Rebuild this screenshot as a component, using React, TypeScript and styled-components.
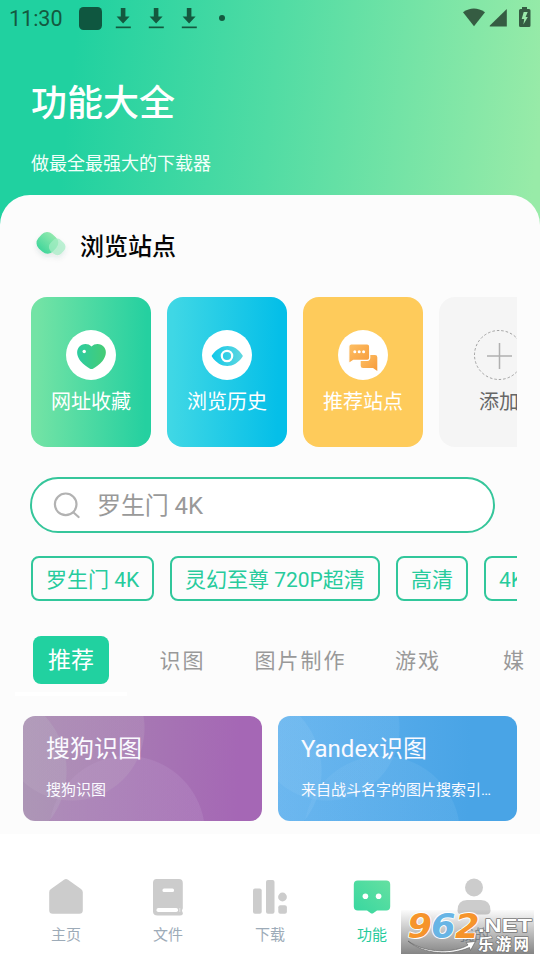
import React from 'react';
import styled, { createGlobalStyle, css } from 'styled-components';

const GlobalStyle = createGlobalStyle`
  * { box-sizing: border-box; }
  body {
    margin: 0;
    background: #fff;
    font-family: Roboto, "Noto Sans CJK SC", sans-serif;
  }
`;

const Screen = styled.div`
  width: 540px;
  height: 960px;
  overflow: hidden;
  display: flex;
  flex-direction: column;
  background: #fff;
`;

const Header = styled.header`
  flex: none;
  height: 235px;
  background: linear-gradient(96deg, #20d1a0 14%, #51dca4 50%, #98eba8 98%);
`;

const StatusBar = styled.div`
  height: 36px;
  padding: 0 9px 0 9px;
  display: flex;
  align-items: center;
  justify-content: space-between;
  color: #14593f;
`;

const Clock = styled.span`
  width: 70px;
  font-size: 21.5px;
  line-height: 36px;
  padding-top: 1px;
`;

const StatusGroup = styled.div`
  display: flex;
  align-items: center;
`;

const Heading = styled.h1`
  margin: 41px 0 0 31px;
  font-size: 36px;
  line-height: 54px;
  font-weight: 500;
  color: #fff;
`;

const Slogan = styled.p`
  margin: 19px 0 0 31px;
  font-size: 18px;
  line-height: 28px;
  color: #f2fffa;
`;

const Panel = styled.main`
  flex: none;
  height: 639px;
  margin-top: -40px;
  border-radius: 30px 30px 0 0;
  background: #fcfcfc;
`;

const SectionTitle = styled.div`
  height: 102px;
  padding: 0 0 0 31px;
  display: flex;
  align-items: center;
  gap: 9px;
`;

const SectionText = styled.h2`
  margin: 0;
  padding-top: 2px;
  font-size: 24px;
  line-height: 36px;
  font-weight: 500;
  color: #050505;
`;

const Scroller = styled.div`
  margin-left: 31px;
  width: 486px;
  display: flex;
  gap: 16px;
  overflow: hidden;
`;

const SiteCard = styled.div<{ $bg: string; $color?: string }>`
  flex: none;
  width: 120px;
  height: 150px;
  padding-top: 33px;
  border-radius: 16px;
  background: ${(p) => p.$bg};
  color: ${(p) => p.$color ?? '#fff'};
  display: flex;
  flex-direction: column;
  align-items: center;
  font-size: 20px;
  line-height: 30px;
  gap: 7px;
  white-space: nowrap;
`;

const SearchBox = styled.div`
  margin: 30px 0 23px 30px;
  width: 465px;
  height: 56px;
  padding-left: 21px;
  display: flex;
  align-items: center;
  gap: 16px;
  border: 2px solid #36c69b;
  border-radius: 28px;
  background: #fff;
  color: #999;
  font-size: 24px;
  line-height: 36px;
`;

const SearchText = styled.span`
  padding-top: 2px;
  letter-spacing: -0.1px;
`;

const Tag = styled.span<{ $width: number }>`
  flex: none;
  width: ${(p) => p.$width}px;
  height: 45px;
  padding: 1px 0 0 13px;
  border: 2px solid #31c79b;
  border-radius: 8px;
  color: #27cb9c;
  font-size: 21px;
  line-height: 43px;
  white-space: nowrap;
`;

const Tabs = styled.div`
  margin: 25px 0 0 15px;
  width: 510px;
  height: 70px;
  display: flex;
  overflow: hidden;
`;

const Tab = styled.div<{ $width: number; $active?: boolean }>`
  flex: none;
  width: ${(p) => p.$width}px;
  padding-top: ${(p) => (p.$active ? 10 : 11)}px;
  display: flex;
  justify-content: center;
  font-size: 21px;
  letter-spacing: 2px;
  line-height: 48px;
  color: #999;
  white-space: nowrap;
  ${(p) =>
    p.$active &&
    css`
      border-bottom: 4px solid #fff;
      color: #fff;
      font-size: 23px;
      letter-spacing: 0;
    `}
`;

const TabPill = styled.span`
  width: 76px;
  height: 48px;
  border-radius: 8px;
  background: #21d1a0;
  text-align: center;
  line-height: 50px;
`;

const ToolGrid = styled.div`
  margin: 20px 0 0 23px;
  display: grid;
  grid-template-columns: 239px 239px;
  gap: 16px;
`;

const ToolCard = styled.article<{ $bg: string; $first: string; $second: string; $third: string }>`
  height: 105px;
  padding: 15px 23px 0;
  border-radius: 12px;
  color: #fafaff;
  background:
    radial-gradient(circle at -37px 55px, ${(p) => p.$first} 80px, transparent 81px),
    radial-gradient(circle at 49px 12px, ${(p) => p.$second} 72px, transparent 73px),
    radial-gradient(circle at 104px 118px, ${(p) => p.$third} 77.5px, transparent 78.5px),
    ${(p) => p.$bg};
`;

const ToolName = styled.div`
  font-size: 24px;
  line-height: 36px;
`;

const ToolNote = styled.div`
  margin-top: 11px;
  font-size: 15px;
  line-height: 24px;
  overflow: hidden;
  text-overflow: ellipsis;
  white-space: nowrap;
`;

const NavBar = styled.nav`
  position: relative;
  flex: none;
  height: 126px;
  padding: 40px 15px 0;
  display: grid;
  grid-template-columns: repeat(5, 102px);
  background: #fff;
`;

const NavItem = styled.div<{ $active?: boolean }>`
  display: flex;
  flex-direction: column;
  align-items: center;
  font-size: 15px;
  line-height: 24px;
  gap: 3px;
  color: ${(p) => (p.$active ? '#27cb9c' : '#9dabb8')};
`;

const Watermark = styled.div`
  position: absolute;
  left: 401px;
  top: 76px;
  width: 133px;
  height: 44px;
  background: linear-gradient(rgba(70, 70, 70, 0.02), rgba(70, 70, 70, 0.66));
`;

const DownloadGlyph = () => (
  <svg width="33" height="24" viewBox="0 0 33 24" fill="currentColor">
    <path d="M15.800 2h4.600v8.500h4.200L18.100 17.500l-6.500-7h4.200z" />
    <path d="M10.800 20.500h15v1.700h-15z" />
  </svg>
);

const AppBadge = () => (
  <svg width="26" height="26" viewBox="0 0 26 26">
    <rect x="0" y="2" width="23" height="23" rx="4.500" fill="#0f5740" />
  </svg>
);

const StatusDot = () => (
  <svg width="24" height="24" viewBox="0 0 24 24">
    <circle cx="18" cy="12" r="3" fill="currentColor" />
  </svg>
);

const SignalIcons = () => (
  <svg width="70" height="24" viewBox="0 0 70 24" fill="#355c42">
    <path d="M2 6.200Q12.800-1.200 24 6.200L13 20.200z" />
    <path d="M45.800 3v17.600H29.300q-1.300 0-.4-1z" />
    <path d="M61 1h5v2h2q1.500 0 1.500 1.500v15q0 1.500-1.500 1.500h-8.500q-1.500 0-1.500-1.500v-15Q58 3 59.500 3H61z" />
    <path d="M62.700 6h4l-2.100 5h2.200l-4.400 7.500.8-5.500h-2.500z" fill="#9ae9aa" />
  </svg>
);

const PetalsIcon = () => (
  <svg width="40" height="36" viewBox="0 0 40 36">
    <defs>
      <linearGradient id="petal" x1="0.5" y1="0" x2="0.5" y2="1">
        <stop stopColor="#91e9ae" />
        <stop offset="1" stopColor="#42d69b" />
      </linearGradient>
      <filter id="soft" x="-30%" y="-30%" width="160%" height="180%">
        <feDropShadow dx="0" dy="3" stdDeviation="2.500" floodColor="#355" floodOpacity=".13" />
      </filter>
    </defs>
    <g filter="url(#soft)">
      <rect x="6.500" y="5" width="19.800" height="19.800" rx="7.500" transform="rotate(42 16.400 14.900)" fill="url(#petal)" />
      <rect x="18.700" y="11.400" width="15" height="15" rx="5.500" transform="rotate(42 26.200 18.900)" fill="#a5edc5" opacity=".72" />
    </g>
  </svg>
);

const HeartIcon = () => (
  <svg width="50" height="50" viewBox="0 0 50 50">
    <defs>
      <linearGradient id="heart">
        <stop stopColor="#2ccca0" />
        <stop offset="1" stopColor="#46cc75" />
      </linearGradient>
    </defs>
    <circle cx="25" cy="25" r="25" fill="#fff" />
    <path d="M25.500 16.500C29 12.800 35 13.300 38 17c3.500 4.500 1.500 10-1.500 14-3 3.600-6.500 6-9.500 7.700q-1.500.8-3 0C21 37 17.500 34.600 14.500 31c-3-4-5-9.500-1.500-14 3-3.700 9-4.200 12.500-.5z" fill="url(#heart)" />
    <circle cx="18.200" cy="21.500" r="1.700" fill="#fff" />
  </svg>
);

const EyeIcon = () => (
  <svg width="50" height="50" viewBox="0 0 50 50">
    <defs>
      <linearGradient id="eye">
        <stop stopColor="#10c8ea" />
        <stop offset="1" stopColor="#60d7df" />
      </linearGradient>
    </defs>
    <circle cx="25" cy="25" r="25" fill="#fff" />
    <path d="M10 25.300C18 13 33 12.500 40.500 25.300q.7.700 0 1.400C32.500 39 18 39 10 26.700q-.7-.7 0-1.400z" fill="url(#eye)" />
    <circle cx="25" cy="26" r="5.200" fill="none" stroke="#fff" strokeWidth="2.200" />
  </svg>
);

const ChatIcon = () => (
  <svg width="50" height="50" viewBox="0 0 50 50">
    <defs>
      <linearGradient id="chat" x1="0" x2="1" y1="0" y2="1">
        <stop stopColor="#fdc064" />
        <stop offset="1" stopColor="#f79a3b" />
      </linearGradient>
    </defs>
    <circle cx="25" cy="25" r="25" fill="#fff" />
    <path d="M25 25h12q2.300 0 2.300 2.300V41L35 38H25q-2.300 0-2.300-2.300V27.300Q22.700 25 25 25z" fill="url(#chat)" />
    <path d="M13.300 14h15.900q2.500 0 2.500 2.500v11.300q0 2.500-2.500 2.500H15.500l-4.700 3.200V16.500q0-2.500 2.500-2.500z" fill="url(#chat)" stroke="#fff" strokeWidth="1.200" />
    <g fill="#fff">
      <circle cx="16.800" cy="21.800" r="1.500" />
      <circle cx="21.200" cy="21.800" r="1.500" />
      <circle cx="25.600" cy="21.800" r="1.500" />
    </g>
  </svg>
);

const AddIcon = () => (
  <svg width="50" height="50" viewBox="0 0 50 50" fill="none">
    <circle cx="25" cy="25" r="24.500" stroke="#999" strokeWidth=".9" strokeDasharray="2.500 2" />
    <path d="M13 26h25M25.500 13v26" stroke="#b0b0b0" strokeWidth="1.500" />
  </svg>
);

const SearchIcon = () => (
  <svg width="28" height="28" viewBox="0 0 28 28" fill="none" stroke="#b2b2b2" strokeWidth="2.200" strokeLinecap="round">
    <circle cx="12.700" cy="13.300" r="10.800" />
    <path d="M20.500 21.500L25.600 26" />
  </svg>
);

const HomeIcon = () => (
  <svg width="38" height="46" viewBox="0 0 38 46" fill="#ccc">
    <path d="M17 5.800q2-1.500 4 0L34 15q1.800 1.200 1.800 3.200v18q0 3.500-3.500 3.500H5.700q-3.500 0-3.500-3.500v-18Q2.200 16 4 15z" />
  </svg>
);

const BookIcon = () => (
  <svg width="38" height="46" viewBox="0 0 38 46">
    <path d="M7.500 5H30q3.800 0 3.800 4v25q0 1.500-.9 2 .4 2.500 1 3 0 2.500-2.900 2.500H8.500Q4 41.500 4 37.500V9q0-4 3.500-4z" fill="#ccc" />
    <rect x="13.500" y="14.500" width="11.500" height="3.500" rx="1.500" fill="#fff" />
    <rect x="7.500" y="34" width="21.500" height="4" rx="1.800" fill="#fff" />
    <path d="M30.800 34v4" stroke="#eee" strokeWidth=".8" />
  </svg>
);

const BarsIcon = () => (
  <svg width="38" height="46" viewBox="0 0 38 46" fill="#ccc">
    <rect x="2" y="14.500" width="8.700" height="25.300" rx="2" />
    <rect x="15" y="6" width="8.500" height="33.800" rx="2" />
    <circle cx="31.500" cy="23" r="4.400" />
    <rect x="27.300" y="31.300" width="8.600" height="8.500" rx="2" />
  </svg>
);

const RobotIcon = () => (
  <svg width="38" height="46" viewBox="0 0 38 46">
    <defs>
      <linearGradient id="robot" x1="0" y1="1" x2="1" y2="0">
        <stop stopColor="#37d7a0" />
        <stop offset="1" stopColor="#65e0a1" />
      </linearGradient>
    </defs>
    <path d="M4.800 6.600h28.400q4 0 4 4v22q0 4-4 4H24L20.500 39q-1.500 1-3 0L14 36.600H4.800q-4 0-4-4v-22q0-4 4-4z" fill="url(#robot)" />
    <circle cx="12.400" cy="22.200" r="2.800" fill="#fff" />
    <circle cx="25.600" cy="22.200" r="2.800" fill="#fff" />
  </svg>
);

const PersonIcon = () => (
  <svg width="38" height="46" viewBox="0 0 38 46" fill="#ccc">
    <circle cx="19" cy="13.500" r="9" />
    <path d="M12 26h14q9.500 0 9.500 10.500Q35.500 40.500 31 40.500H7Q2.500 40.500 2.500 36.500 2.500 26 12 26z" />
  </svg>
);

const digits = [
  { char: '9', x: 6.5, color: '#f6942b' },
  { char: '6', x: 30, color: '#68b5e5' },
  { char: '2', x: 54, color: '#f6942b' },
];

const WatermarkLogo = () => (
  <svg width="133" height="44" viewBox="0 0 133 44">
    <path d="M7 31C25 44 54 43 67 35L65 32.500 74.500 31.300 69.500 40.500 68.500 37.500C49 46 23 44.500 7 31z" fill="#fff" stroke="#666" strokeWidth=".7" />
    <g fontFamily="'DejaVu Sans', sans-serif" fontWeight="700" fontStyle="italic" fontSize="33" strokeLinejoin="round">
      {digits.map((d) => (
        <text
          key={d.char}
          x={d.x}
          y="27.800"
          textLength="24.500"
          lengthAdjust="spacingAndGlyphs"
          fill={d.color}
          stroke="#fff"
          strokeWidth="1.800"
          paintOrder="stroke"
        >
          {d.char}
        </text>
      ))}
    </g>
    <g fill="#fff" stroke="#777" strokeWidth="1.400" paintOrder="stroke" strokeLinejoin="round" fontWeight="700">
      <text x="77" y="21.800" fontFamily="'Liberation Sans', sans-serif" fontSize="19" textLength="54" lengthAdjust="spacingAndGlyphs">.NET</text>
      <text x="77" y="40" fontFamily="'Noto Sans CJK SC', sans-serif" fontSize="15.500" textLength="51" lengthAdjust="spacing">乐游网</text>
    </g>
  </svg>
);

const sites = [
  { label: '网址收藏', bg: 'linear-gradient(91deg, #73e3a5 5%, #25d0a0 95%)', icon: <HeartIcon /> },
  { label: '浏览历史', bg: 'linear-gradient(91deg, #3fd7e5 5%, #05bfe8 92%)', icon: <EyeIcon /> },
  { label: '推荐站点', bg: '#fecb5b', icon: <ChatIcon /> },
  { label: '添加', bg: '#f5f5f5', color: '#666', icon: <AddIcon /> },
];

const tags = [
  { label: '罗生门 4K', width: 123 },
  { label: '灵幻至尊 720P超清', width: 210 },
  { label: '高清', width: 72 },
  { label: '4K', width: 56 },
];

const tabs = [
  { label: '识图', width: 111 },
  { label: '图片制作', width: 125 },
  { label: '游戏', width: 110 },
  { label: '媒体', width: 106 },
];

const navItems = [
  { label: '主页', icon: <HomeIcon /> },
  { label: '文件', icon: <BookIcon /> },
  { label: '下载', icon: <BarsIcon /> },
  { label: '功能', icon: <RobotIcon />, active: true },
  { label: '我的', icon: <PersonIcon /> },
];

export default function App() {
  return (
    <>
      <GlobalStyle />
      <Screen>
        <Header>
          <StatusBar>
            <StatusGroup>
              <Clock>11:30</Clock>
              <AppBadge />
              <DownloadGlyph />
              <DownloadGlyph />
              <DownloadGlyph />
              <StatusDot />
            </StatusGroup>
            <SignalIcons />
          </StatusBar>
          <Heading>功能大全</Heading>
          <Slogan>做最全最强大的下载器</Slogan>
        </Header>
        <Panel>
          <SectionTitle>
            <PetalsIcon />
            <SectionText>浏览站点</SectionText>
          </SectionTitle>
          <Scroller>
            {sites.map((s) => (
              <SiteCard key={s.label} $bg={s.bg} $color={s.color}>
                {s.icon}
                {s.label}
              </SiteCard>
            ))}
          </Scroller>
          <SearchBox>
            <SearchIcon />
            <SearchText>罗生门 4K</SearchText>
          </SearchBox>
          <Scroller>
            {tags.map((t) => (
              <Tag key={t.label} $width={t.width}>{t.label}</Tag>
            ))}
          </Scroller>
          <Tabs>
            <Tab $width={112} $active>
              <TabPill>推荐</TabPill>
            </Tab>
            {tabs.map((t) => (
              <Tab key={t.label} $width={t.width}>{t.label}</Tab>
            ))}
          </Tabs>
          <ToolGrid>
            <ToolCard
              $bg="linear-gradient(92deg, #a88bb1, #a567b5 90%)"
              $first="rgba(190, 190, 200, 0.22)"
              $second="rgba(190, 165, 195, 0.28)"
              $third="rgba(190, 155, 205, 0.26)"
            >
              <ToolName>搜狗识图</ToolName>
              <ToolNote>搜狗识图</ToolNote>
            </ToolCard>
            <ToolCard
              $bg="linear-gradient(92deg, #62b2ee, #49a4e6 80%)"
              $first="rgba(150, 205, 245, 0.2)"
              $second="rgba(150, 205, 245, 0.16)"
              $third="rgba(150, 205, 245, 0.14)"
            >
              <ToolName>Yandex识图</ToolName>
              <ToolNote>来自战斗名字的图片搜索引擎</ToolNote>
            </ToolCard>
          </ToolGrid>
        </Panel>
        <NavBar>
          {navItems.map((n) => (
            <NavItem key={n.label} $active={n.active}>
              {n.icon}
              {n.label}
            </NavItem>
          ))}
          <Watermark>
            <WatermarkLogo />
          </Watermark>
        </NavBar>
      </Screen>
    </>
  );
}
